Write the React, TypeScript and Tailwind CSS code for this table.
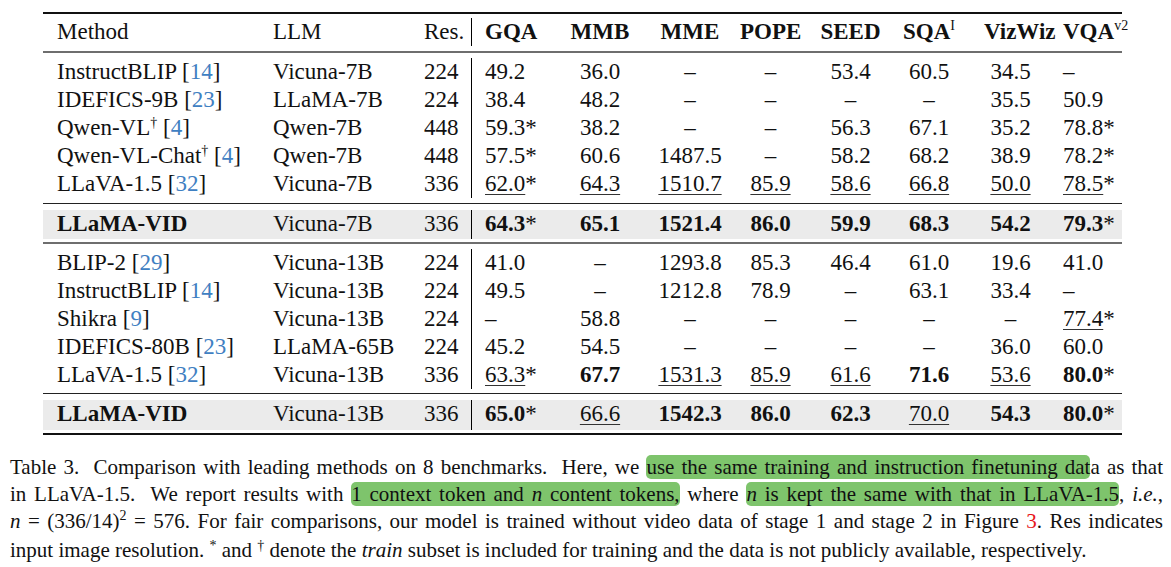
import React from "react";

const COLW = [
  "w-[230px] pl-[14px] text-left",
  "w-[151px] text-left",
  "w-[48px] text-left border-r border-black",
  "w-[88px] pl-[13px] text-left",
  "w-[80px] text-center",
  "w-[100px] text-center",
  "w-[61px] text-center",
  "w-[99px] text-center",
  "w-[58px] text-center",
  "w-[105px] text-center",
  "w-[59px] text-left whitespace-nowrap",
];

function Num({ v }: { v: string }) {
  let s = v;
  const bold = s.startsWith("!");
  if (bold) s = s.slice(1);
  const star = s.endsWith("*");
  if (star) s = s.slice(0, -1);
  const u = s.startsWith("_");
  if (u) s = s.slice(1);
  return (
    <>
      <span
        className={
          (bold ? "font-bold " : "") +
          (u ? "underline decoration-[1px] underline-offset-[3px] decoration-[#333]" : "")
        }
      >
        {s}
      </span>
      {star && <span>*</span>}
    </>
  );
}

function Cite({ n }: { n: string }) {
  return (
    <span>
      [<span className="text-[#3f80c2]">{n}</span>]
    </span>
  );
}

type RowData = {
  name: React.ReactNode;
  llm: string;
  res: string;
  vals: string[];
};

function Row({ r, h = "h-[28px] leading-[28px]" }: { r: RowData; h?: string }) {
  return (
    <div className={"flex " + h}>
      <div className={COLW[0]}>{r.name}</div>
      <div className={COLW[1]}>{r.llm}</div>
      <div className={COLW[2]}>{r.res}</div>
      {r.vals.map((v, i) => (
        <div key={i} className={COLW[3 + i]}>
          <Num v={v} />
        </div>
      ))}
    </div>
  );
}

const Dag = () => <span className="relative -top-[8px] text-[14px]">†</span>;

const block1: RowData[] = [
  { name: <>InstructBLIP <Cite n="14" /></>, llm: "Vicuna-7B", res: "224", vals: ["49.2", "36.0", "–", "–", "53.4", "60.5", "34.5", "–"] },
  { name: <>IDEFICS-9B <Cite n="23" /></>, llm: "LLaMA-7B", res: "224", vals: ["38.4", "48.2", "–", "–", "–", "–", "35.5", "50.9"] },
  { name: <>Qwen-VL<Dag /> <Cite n="4" /></>, llm: "Qwen-7B", res: "448", vals: ["59.3*", "38.2", "–", "–", "56.3", "67.1", "35.2", "78.8*"] },
  { name: <>Qwen-VL-Chat<Dag /> <Cite n="4" /></>, llm: "Qwen-7B", res: "448", vals: ["57.5*", "60.6", "1487.5", "–", "58.2", "68.2", "38.9", "78.2*"] },
  { name: <>LLaVA-1.5 <Cite n="32" /></>, llm: "Vicuna-7B", res: "336", vals: ["_62.0*", "_64.3", "_1510.7", "_85.9", "_58.6", "_66.8", "_50.0", "_78.5*"] },
];
const ours1: RowData = { name: <span className="font-bold">LLaMA-VID</span>, llm: "Vicuna-7B", res: "336", vals: ["!64.3*", "!65.1", "!1521.4", "!86.0", "!59.9", "!68.3", "!54.2", "!79.3*"] };

const block2: RowData[] = [
  { name: <>BLIP-2 <Cite n="29" /></>, llm: "Vicuna-13B", res: "224", vals: ["41.0", "–", "1293.8", "85.3", "46.4", "61.0", "19.6", "41.0"] },
  { name: <>InstructBLIP <Cite n="14" /></>, llm: "Vicuna-13B", res: "224", vals: ["49.5", "–", "1212.8", "78.9", "–", "63.1", "33.4", "–"] },
  { name: <>Shikra <Cite n="9" /></>, llm: "Vicuna-13B", res: "224", vals: ["–", "58.8", "–", "–", "–", "–", "–", "_77.4*"] },
  { name: <>IDEFICS-80B <Cite n="23" /></>, llm: "LLaMA-65B", res: "224", vals: ["45.2", "54.5", "–", "–", "–", "–", "36.0", "60.0"] },
  { name: <>LLaVA-1.5 <Cite n="32" /></>, llm: "Vicuna-13B", res: "336", vals: ["_63.3*", "!67.7", "_1531.3", "_85.9", "_61.6", "!71.6", "_53.6", "!80.0*"] },
];
const ours2: RowData = { name: <span className="font-bold">LLaMA-VID</span>, llm: "Vicuna-13B", res: "336", vals: ["!65.0*", "_66.6", "!1542.3", "!86.0", "!62.3", "_70.0", "!54.3", "!80.0*"] };

const HL = ({ children }: { children: React.ReactNode }) => (
  <span className="bg-[#7ec46c] rounded-[5px]">{children}</span>
);

export default function App() {
  return (
    <div className="w-[1171px] h-[567px] bg-white text-[#111] font-['Liberation_Serif',serif] overflow-hidden">
      <div className="pt-[12px] ml-[43px] w-[1079px] text-[23px]">
        <div className="h-[2px] bg-[#111]" />
        {/* header */}
        <div className="pt-[4px] pb-[5px]">
          <div className="flex h-[28px] leading-[28px]">
            <div className={COLW[0]}>Method</div>
            <div className={COLW[1]}>LLM</div>
            <div className={COLW[2]}>Res.</div>
            <div className={COLW[3] + " font-bold"}>GQA</div>
            <div className={COLW[4] + " font-bold"}>MMB</div>
            <div className={COLW[5] + " font-bold"}>MME</div>
            <div className={COLW[6] + " font-bold"}>POPE</div>
            <div className={COLW[7] + " font-bold"}>SEED</div>
            <div className={COLW[8] + " font-bold"}>
              SQA<span className="relative -top-[9px] text-[14px] font-normal">I</span>
            </div>
            <div className="w-[105px] pl-[26px] text-left font-bold">VizWiz</div>
            <div className={COLW[10] + " font-bold"}>
              VQA<span className="relative -top-[9px] text-[14px] font-normal">v2</span>
            </div>
          </div>
        </div>
        <div className="h-[2px] bg-[#6e6e6e]" />
        <div className="pt-[5px] pb-[5px]">
          {block1.map((r, i) => (
            <Row key={i} r={r} />
          ))}
        </div>
        <div className="h-[1px] bg-[#222]" />
        <div className="pt-[6px] pb-[3px]">
          <div className="bg-[#ebebeb]">
            <Row r={ours1} h="h-[29px] leading-[27px] items-stretch" />
          </div>
        </div>
        <div className="h-[2px] bg-[#6e6e6e]" />
        <div className="pt-[5px] pb-[4px]">
          {block2.map((r, i) => (
            <Row key={i} r={r} />
          ))}
        </div>
        <div className="h-[1px] bg-[#222]" />
        <div className="pt-[6px] pb-[3px]">
          <div className="bg-[#ebebeb]">
            <Row r={ours2} h="h-[30px] leading-[27px] items-stretch" />
          </div>
        </div>
        <div className="h-[2px] bg-[#111]" />
      </div>

      {/* caption */}
      <div className="mt-[19px] ml-[10px] w-[1153px] text-[21px] leading-[27px]">
        <div className="text-justify [text-align-last:justify] [word-spacing:-3px]">
          Table 3.&nbsp; Comparison with leading methods on 8 benchmarks.&nbsp; Here, we{" "}
          <HL>use the same training and instruction finetuning dat</HL>a as that
        </div>
        <div className="text-justify [text-align-last:justify] [word-spacing:-3px]">
          in LLaVA-1.5.&nbsp; We report results with{" "}
          <HL>
            1 context token and <i>n</i> content tokens,
          </HL>{" "}
          where{" "}
          <HL>
            <i>n</i> is kept the same with that in LLaVA-1.5
          </HL>
          , <i>i.e.</i>,
        </div>
        <div className="text-justify [text-align-last:justify] [word-spacing:-3px]">
          <i>n</i>&nbsp;=&nbsp;(336/14)<span className="relative -top-[8px] text-[14px]">2</span>&nbsp;=&nbsp;576. For fair
          comparisons, our model is trained without video data of stage 1 and stage 2 in Figure{" "}
          <span className="text-[#e8161b]">3</span>. Res indicates
        </div>
        <div className="text-left">
          input image resolution. <span className="relative -top-[7px] text-[14px]">*</span> and{" "}
          <span className="relative -top-[7px] text-[14px]">†</span> denote the <i>train</i> subset is
          included for training and the data is not publicly available, respectively.
        </div>
      </div>
    </div>
  );
}
